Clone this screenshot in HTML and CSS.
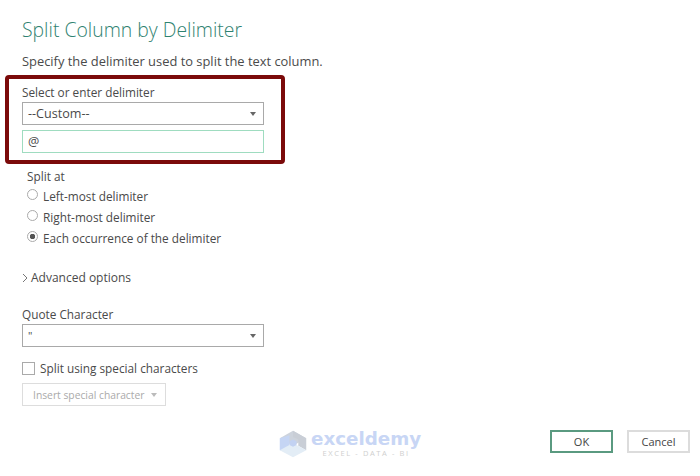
FILE: index.html
```html
<!DOCTYPE html>
<html lang="en">
<head>
    <meta charset="UTF-8">
    <title>Split Column by Delimiter</title>
    <link rel="stylesheet" href="styles.css">
</head>
<body>
<div class="dialog">
    <h1>Split Column by Delimiter</h1>
    <p class="intro">Specify the delimiter used to split the text column.</p>

    <div class="field-label first">Select or enter delimiter</div>
    <div class="select">
        <span>--Custom--</span>
        <span class="caret"></span>
    </div>
    <div class="text-input">@</div>
    <div class="highlight"></div>

    <div class="split-at">
        <div class="group-label">Split at</div>
        <div class="radio-row"><span class="radio"></span>Left-most delimiter</div>
        <div class="radio-row"><span class="radio"></span>Right-most delimiter</div>
        <div class="radio-row"><span class="radio checked"></span>Each occurrence of the delimiter</div>
    </div>

    <div class="advanced">
        <svg class="chevron" width="6" height="10" viewBox="0 0 6 10"><path d="M1 1l4 4-4 4" fill="none" stroke="#777" stroke-width="1"/></svg>
        Advanced options
    </div>

    <div class="field-label quote">Quote Character</div>
    <div class="select">
        <span class="quote-value">"</span>
        <span class="caret"></span>
    </div>

    <div class="check-row"><span class="checkbox"></span>Split using special characters</div>
    <div class="insert-btn">Insert special character<span class="caret light"></span></div>

    <div class="watermark">
        <svg width="30" height="30" viewBox="0 0 34 32">
            <path d="M17 1L32 9.5 17 18 2 9.5z" fill="#cdd3dc"/>
            <path d="M2 9.5L13 6 13 17 17 24 2 23z" fill="#c5d5f4"/>
            <path d="M17 1L32 9.5V23L23 18V11L17 8z" fill="#c9ced6"/>
            <path d="M2 23L17 15 32 23 17 31z" fill="#e3edf6"/>
            <path d="M13 13L17 11 21 13V17L17 19 13 17z" fill="#c2d2f2"/>
        </svg>
        <div>
            <div class="wm-name">exceldemy</div>
            <div class="wm-sub">EXCEL - DATA - BI</div>
        </div>
    </div>

    <div class="actions">
        <button class="btn primary">OK</button>
        <button class="btn">Cancel</button>
    </div>
</div>
</body>
</html>
```

FILE: styles.css
```css
body {
    margin: 0;
    background: #fff;
    font-family: "Open Sans", "Noto Sans", Arial, sans-serif;
    color: #4a4a4a;
}
.dialog {
    position: relative;
    box-sizing: border-box;
    width: 700px;
    height: 476px;
    padding: 17px 36px 0 22px;
    font-size: 11.8px;
    overflow: hidden;
}
h1 {
    margin: 0;
    font-size: 19.4px;
    font-weight: 300;
    line-height: 26px;
    color: #2f8270;
}
.intro {
    margin: 8px 0 0;
    font-size: 12.9px;
    line-height: 20px;
}
.field-label {
    line-height: 19px;
}
.field-label.first {
    margin-top: 12px;
}
.field-label.quote {
    margin-top: 18px;
}
.select, .text-input {
    box-sizing: border-box;
    width: 242px;
    height: 23px;
    border: 1px solid #a9a9a9;
    padding: 0 5px;
    font-size: 12.6px;
    line-height: 21px;
    display: flex;
    justify-content: space-between;
    align-items: center;
}
.text-input {
    margin-top: 5px;
    border-color: #9fdcc0;
}
.caret {
    width: 0;
    height: 0;
    margin-right: 2px;
    border-left: 3.5px solid transparent;
    border-right: 3.5px solid transparent;
    border-top: 4px solid #666;
}
.caret.light {
    margin: 0 0 0 7px;
    border-top-color: #bbb;
}
.quote-value {
    font-size: 11px;
}
.highlight {
    position: absolute;
    left: 5px;
    top: 75px;
    width: 272px;
    height: 81px;
    border: 4px solid #7b0a0a;
    border-radius: 4px;
}
.split-at {
    margin: 14px 0 0 5px;
}
.group-label {
    line-height: 18px;
}
.radio-row {
    display: flex;
    align-items: center;
    height: 21px;
}
.radio {
    box-sizing: border-box;
    width: 11px;
    height: 11px;
    margin: -3px 5px 0 0;
    border: 1px solid #aaa;
    border-radius: 50%;
}
.radio.checked {
    background: radial-gradient(circle, #555 0 2.5px, #fff 3px);
}
.advanced {
    display: flex;
    align-items: center;
    gap: 3px;
    margin-top: 21px;
    line-height: 18px;
    font-size: 12px;
}
.chevron {
    flex: none;
}
.check-row {
    display: flex;
    align-items: center;
    margin-top: 12px;
    line-height: 18px;
}
.checkbox {
    box-sizing: border-box;
    width: 13px;
    height: 13px;
    margin-right: 5px;
    border: 1px solid #aaa;
}
.insert-btn {
    display: inline-flex;
    align-items: center;
    box-sizing: border-box;
    height: 23px;
    margin-top: 6px;
    padding: 0 8px 0 10px;
    border: 1px solid #ddd;
    font-size: 10.3px;
    color: #aaa;
}
.actions {
    position: absolute;
    right: 10px;
    bottom: 23px;
    display: flex;
    gap: 14px;
}
.btn {
    box-sizing: border-box;
    width: 63px;
    height: 23px;
    padding: 0;
    background: #fff;
    border: 2px solid #dcdcdc;
    font: inherit;
    font-size: 11px;
    color: #444;
}
.btn.primary {
    border-color: #5a9a80;
}
.watermark {
    position: absolute;
    left: 278px;
    top: 429px;
    display: flex;
    gap: 3px;
    align-items: center;
}
.wm-name {
    font-family: "DejaVu Sans", sans-serif;
    font-size: 18.3px;
    font-weight: 700;
    line-height: 18px;
    color: #c8d6f5;
}
.wm-sub {
    margin-top: 1px;
    font-size: 7.5px;
    line-height: 9px;
    letter-spacing: 1.6px;
    text-align: center;
    color: #cfcfcf;
}
```
